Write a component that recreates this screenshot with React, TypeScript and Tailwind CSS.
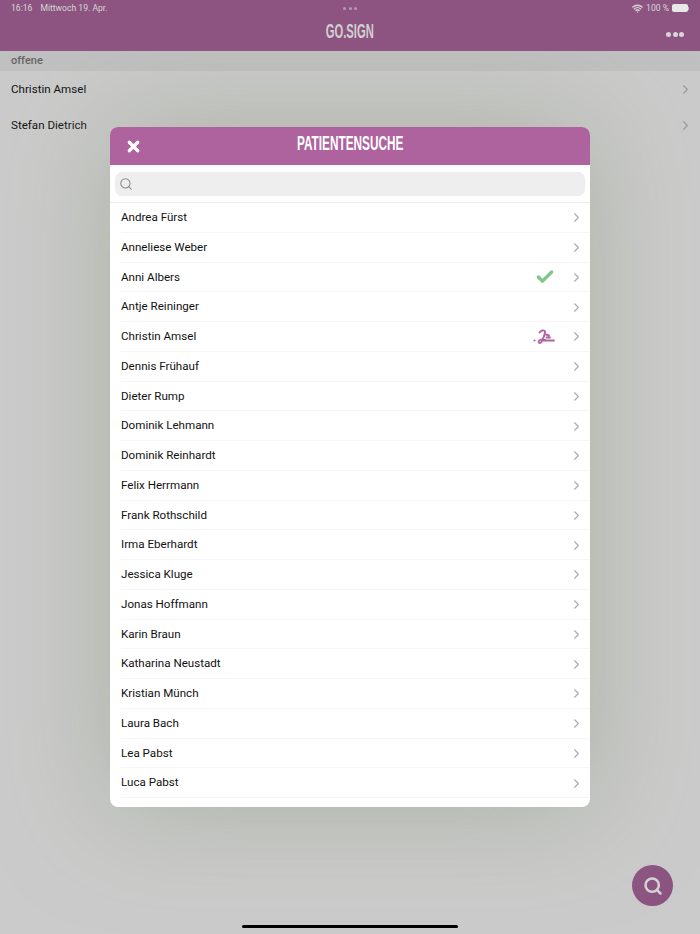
import { Search, Check, X, ChevronRight, Wifi } from "lucide-react";

const patients = [
  { name: "Andrea Fürst" },
  { name: "Anneliese Weber" },
  { name: "Anni Albers", status: "done" },
  { name: "Antje Reininger" },
  { name: "Christin Amsel", status: "sign" },
  { name: "Dennis Frühauf" },
  { name: "Dieter Rump" },
  { name: "Dominik Lehmann" },
  { name: "Dominik Reinhardt" },
  { name: "Felix Herrmann" },
  { name: "Frank Rothschild" },
  { name: "Irma Eberhardt" },
  { name: "Jessica Kluge" },
  { name: "Jonas Hoffmann" },
  { name: "Karin Braun" },
  { name: "Katharina Neustadt" },
  { name: "Kristian Münch" },
  { name: "Laura Bach" },
  { name: "Lea Pabst" },
  { name: "Luca Pabst" },
];

function SignatureIcon() {
  return (
    <svg width="22" height="16" viewBox="0 0 22 16" fill="none" stroke="#b0639f" strokeWidth="1.9" strokeLinecap="round">
      <path d="M6.500 3.500C8 1.500 11.500 0.500 12 2.500C12.500 4.500 10 9.500 9 12C8.200 14.500 5.500 14.500 5.700 12.500C5.900 10.500 9.500 10 12 11" />
      <path d="M13 5.500L16 6.500M13.500 8.500L17 8.500M10 11.500L21 11.500" />
      <circle cx="1.500" cy="11.500" r="1.100" fill="#b0639f" stroke="none" />
    </svg>
  );
}

function BackgroundRow({ name }: { name: string }) {
  return (
    <div className="flex h-[36px] items-center justify-between pl-[11px] pr-[7px] pt-[1px] text-[11.6px] text-[#111]">
      <span>{name}</span>
      <ChevronRight className="size-[15px] text-[#999]" strokeWidth={1.75} />
    </div>
  );
}

export default function App() {
  return (
    <div className="relative h-[934px] w-[700px] overflow-hidden bg-[#cbcbcb] font-['Roboto',sans-serif]">
      <header className="relative z-10 h-[51px] bg-[#8d5481]">
        <div className="flex h-[17px] items-center justify-between pl-[11px] pr-[11px] text-[8.6px] text-[#d6d6d6]">
          <div className="flex gap-[8px]">
            <span>16:16</span>
            <span>Mittwoch 19. Apr.</span>
          </div>
          <div className="flex items-center gap-[3px]">
            <Wifi className="size-[11px]" strokeWidth={3} />
            <span>100 %</span>
            <div className="flex items-center">
              <div className="h-[8px] w-[16px] rounded-[2px] bg-[#e8e8e8]" />
              <div className="h-[3px] w-[1px] bg-[#bbb]" />
            </div>
          </div>
        </div>
        <div className="flex h-[34px] items-center justify-end pr-[16px]">
          <div className="flex gap-[1.5px]">
            <div className="size-[5px] rounded-full bg-[#d6d6d6]" />
            <div className="size-[5px] rounded-full bg-[#d6d6d6]" />
            <div className="size-[5px] rounded-full bg-[#d6d6d6]" />
          </div>
        </div>
        <div className="absolute left-1/2 top-[7px] flex -translate-x-1/2 gap-[2.5px]">
          <div className="size-[3px] rounded-full bg-[#b89aae]" />
          <div className="size-[3px] rounded-full bg-[#b89aae]" />
          <div className="size-[3px] rounded-full bg-[#b89aae]" />
        </div>
        <div className="absolute left-0 right-0 top-[20px] flex justify-center">
          <span className="inline-block scale-x-[0.56] text-[20px] font-bold leading-[22px] text-[#d0d0d0] font-['Liberation_Sans',sans-serif]">
            GO.SIGN
          </span>
        </div>
      </header>

      <div className="flex h-[20px] items-center bg-[#c0c0c0] pl-[11px] text-[11px] font-medium text-[#666]">
        offene
      </div>
      <BackgroundRow name="Christin Amsel" />
      <BackgroundRow name="Stefan Dietrich" />

      {/* Suche Button */}
      <div className="absolute left-[632px] top-[865px] flex size-[41px] items-center justify-center rounded-full bg-[#8d5481]">
        <Search className="size-[20px] text-[#d4d4d4]" strokeWidth={3} />
      </div>

      <div className="absolute bottom-[6px] left-[242px] h-[3px] w-[216px] rounded-full bg-black" />

      {/* Modal */}
      <div className="absolute left-[110px] top-[127px] h-[680px] w-[480px] overflow-hidden rounded-[8px] bg-white shadow-[0_0_110px_rgba(160,170,150,0.75)]">
        <div className="relative flex h-[38px] items-center justify-center bg-[#ae639e]">
          <button className="absolute left-[15px] top-[11px] text-white">
            <X className="size-[17px]" strokeWidth={4.5} />
          </button>
          <span className="-mt-[6px] inline-block scale-x-[0.59] text-[20px] font-bold leading-[22px] text-white font-['Liberation_Sans',sans-serif]">
            PATIENTENSUCHE
          </span>
        </div>
        <div className="border-b border-[#ececec] px-[5px] pb-[6px] pt-[7px]">
          <div className="flex h-[24px] items-center rounded-[7px] bg-[#eeeeee] pl-[4px]">
            <Search className="size-[14px] text-[#888]" strokeWidth={1.75} />
          </div>
        </div>
        <div>
          {patients.map((p) => (
            <div key={p.name} className="ml-[11px] flex h-[29.76px] items-center border-b border-[#f6f6f6] pr-[6px] pt-[1px] text-[11.6px] text-[#111]">
              <span className="flex-1">{p.name}</span>
              {p.status === "done" && <Check className="mr-[14px] size-[20px] text-[#82c48c]" strokeWidth={4} />}
              {p.status === "sign" && (
                <div className="mr-[14px]">
                  <SignatureIcon />
                </div>
              )}
              <ChevronRight className="size-[15px] text-[#aaa]" strokeWidth={1.75} />
            </div>
          ))}
        </div>
      </div>
    </div>
  );
}
